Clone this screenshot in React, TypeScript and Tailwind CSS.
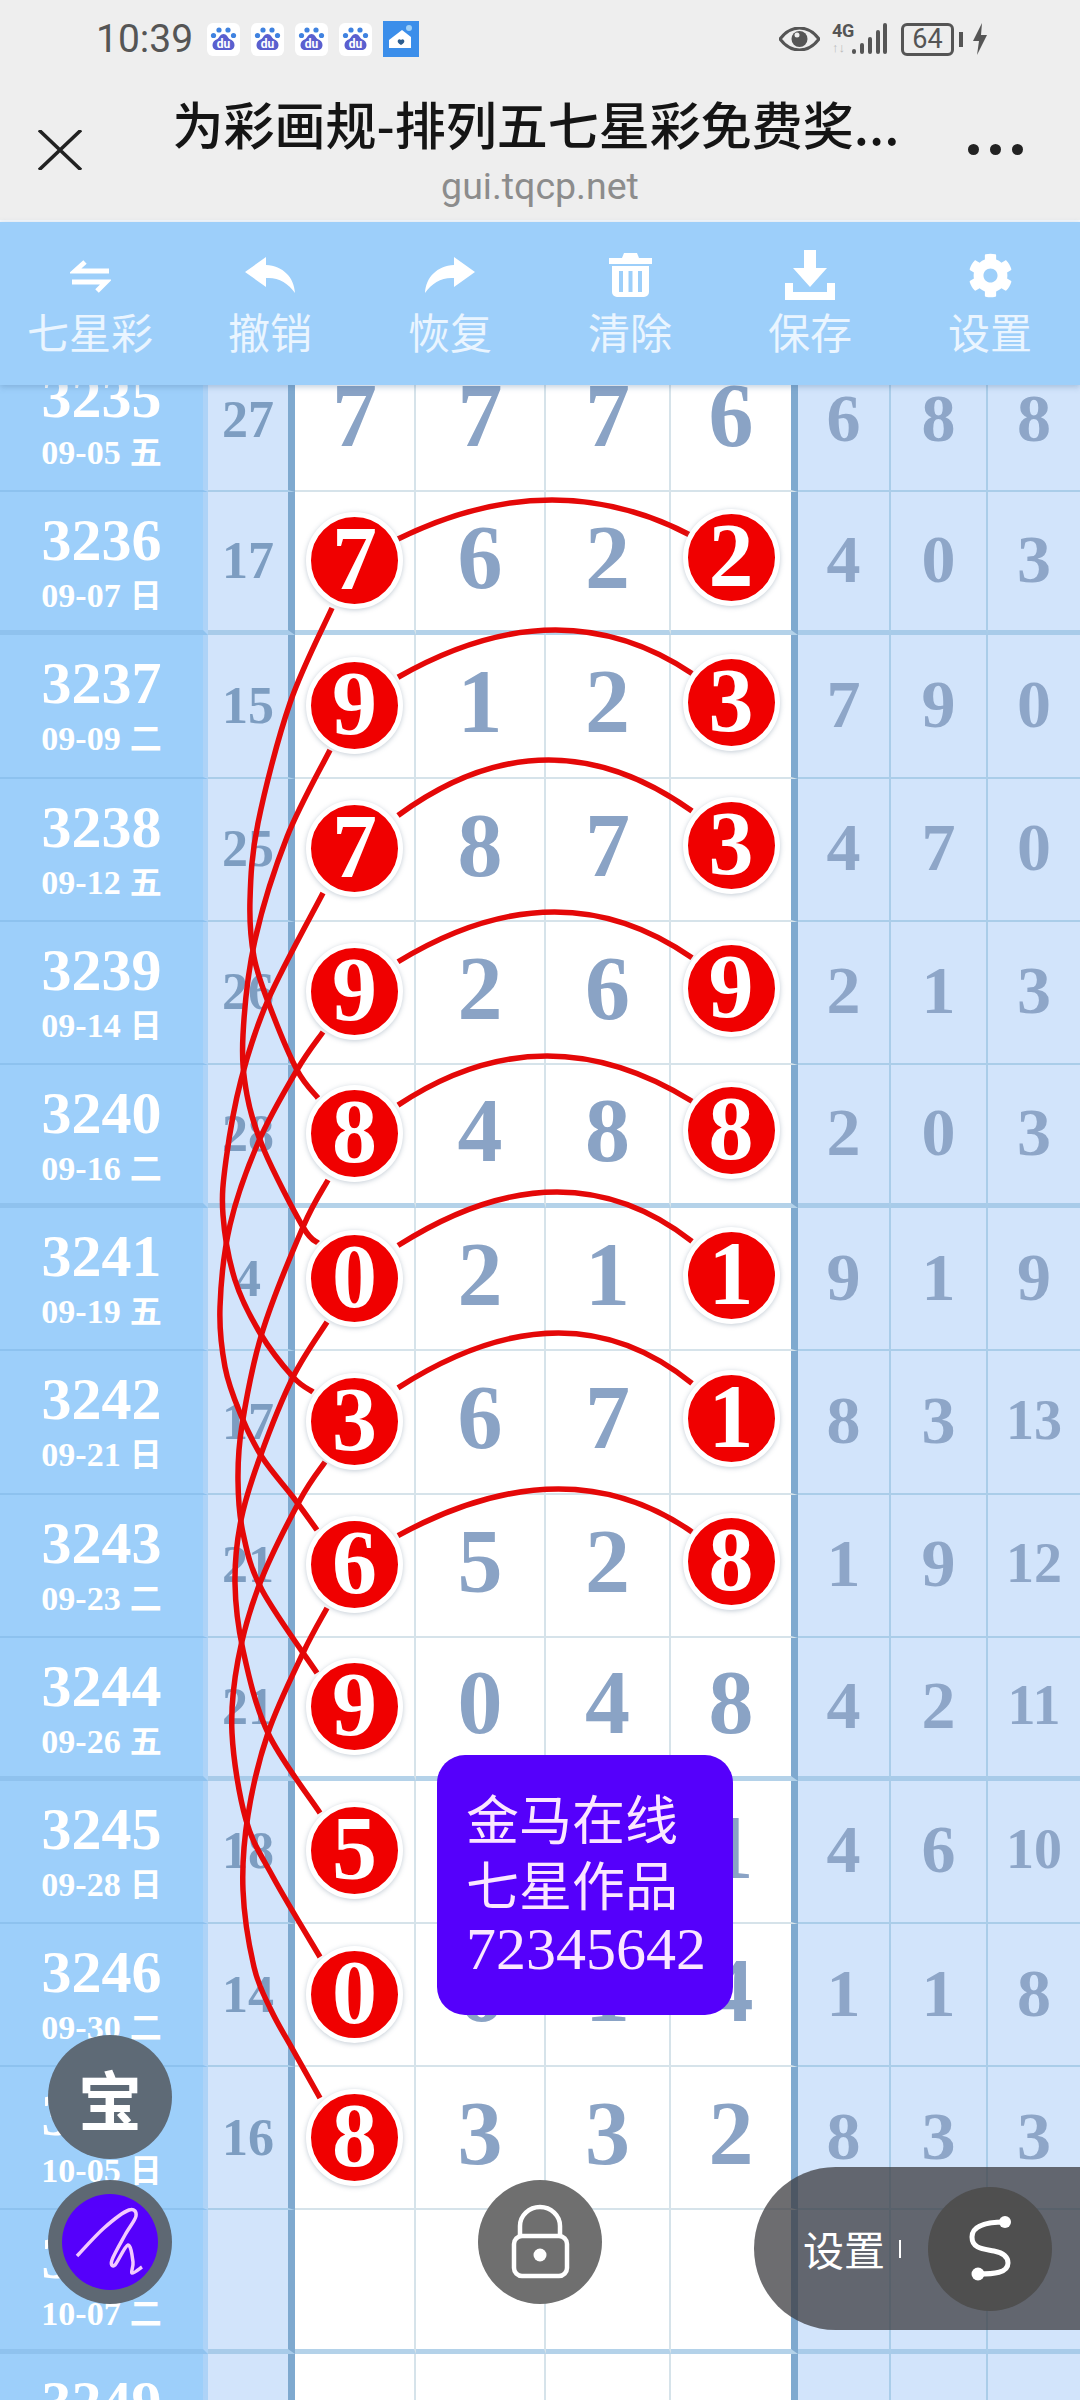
import React from 'react';
import { FaCog } from 'react-icons/fa';

type Row = {
  no: string;
  date: string;
  week: string;
  span: string;
  nums: string[];
  hits: number[];
  rest: string[];
};

const rows: Row[] = [
  { no: '3235', date: '09-05', week: '五', span: '27', nums: ['7', '7', '7', '6'], hits: [], rest: ['6', '8', '8'] },
  { no: '3236', date: '09-07', week: '日', span: '17', nums: ['7', '6', '2', '2'], hits: [0, 3], rest: ['4', '0', '3'] },
  { no: '3237', date: '09-09', week: '二', span: '15', nums: ['9', '1', '2', '3'], hits: [0, 3], rest: ['7', '9', '0'] },
  { no: '3238', date: '09-12', week: '五', span: '25', nums: ['7', '8', '7', '3'], hits: [0, 3], rest: ['4', '7', '0'] },
  { no: '3239', date: '09-14', week: '日', span: '26', nums: ['9', '2', '6', '9'], hits: [0, 3], rest: ['2', '1', '3'] },
  { no: '3240', date: '09-16', week: '二', span: '28', nums: ['8', '4', '8', '8'], hits: [0, 3], rest: ['2', '0', '3'] },
  { no: '3241', date: '09-19', week: '五', span: '4', nums: ['0', '2', '1', '1'], hits: [0, 3], rest: ['9', '1', '9'] },
  { no: '3242', date: '09-21', week: '日', span: '17', nums: ['3', '6', '7', '1'], hits: [0, 3], rest: ['8', '3', '13'] },
  { no: '3243', date: '09-23', week: '二', span: '21', nums: ['6', '5', '2', '8'], hits: [0, 3], rest: ['1', '9', '12'] },
  { no: '3244', date: '09-26', week: '五', span: '21', nums: ['9', '0', '4', '8'], hits: [0], rest: ['4', '2', '11'] },
  { no: '3245', date: '09-28', week: '日', span: '18', nums: ['5', '3', '7', '1'], hits: [0], rest: ['4', '6', '10'] },
  { no: '3246', date: '09-30', week: '二', span: '14', nums: ['0', '6', '1', '4'], hits: [0], rest: ['1', '1', '8'] },
  { no: '3247', date: '10-05', week: '日', span: '16', nums: ['8', '3', '3', '2'], hits: [0], rest: ['8', '3', '3'] },
  { no: '3248', date: '10-07', week: '二', span: '', nums: ['', '', '', ''], hits: [], rest: ['', '', ''] },
  { no: '3249', date: '10-09', week: '四', span: '', nums: ['', '', '', ''], hits: [], rest: ['', '', ''] },
];

// centre line of the first ball row, then one row height per step
const ballY = (i: number) => 562 + i * 143;

// peak of each arc across a row
const arcPeaks = [
  [553, 500], [560, 630], [546, 760], [558, 912],
  [543, 1056], [563, 1192], [566, 1333], [566, 1489],
];

// curves that run down the left side from ball to ball, read off the picture
const curves: number[][][] = [
  [[332, 608], [290, 703], [258, 823], [250, 900], [254, 957], [270, 1007], [297, 1070], [318, 1098]],
  [[330, 750], [287, 837], [255, 940], [243, 1035], [247, 1095], [264, 1150], [303, 1227], [318, 1243]],
  [[323, 893], [268, 1000], [241, 1080], [226, 1160], [223, 1215], [235, 1280], [260, 1333], [293, 1377], [313, 1392]],
  [[323, 1032], [297, 1070], [258, 1143], [230, 1225], [220, 1307], [225, 1367], [240, 1413], [262, 1457], [293, 1497], [317, 1530]],
  [[328, 1180], [303, 1227], [262, 1333], [242, 1425], [238, 1480], [243, 1533], [262, 1590], [317, 1673]],
  [[327, 1322], [293, 1377], [260, 1457], [241, 1520], [235, 1583], [243, 1650], [268, 1733], [320, 1813]],
  [[325, 1462], [300, 1500], [260, 1583], [238, 1660], [232, 1733], [246, 1820], [273, 1877], [320, 1957]],
  [[327, 1608], [303, 1653], [268, 1733], [248, 1815], [243, 1890], [254, 1967], [271, 2010], [293, 2050], [320, 2098]],
];

function smooth(pts: number[][]) {
  let d = `M${pts[0][0]} ${pts[0][1]}`;
  for (let i = 0; i < pts.length - 1; i++) {
    const p0 = pts[Math.max(i - 1, 0)];
    const p1 = pts[i];
    const p2 = pts[i + 1];
    const p3 = pts[Math.min(i + 2, pts.length - 1)];
    const c1x = p1[0] + (p2[0] - p0[0]) / 6;
    const c1y = p1[1] + (p2[1] - p0[1]) / 6;
    const c2x = p2[0] - (p3[0] - p1[0]) / 6;
    const c2y = p2[1] - (p3[1] - p1[1]) / 6;
    d += ` C${c1x} ${c1y} ${c2x} ${c2y} ${p2[0]} ${p2[1]}`;
  }
  return d;
}

function arcPath(i: number) {
  const [px, py] = arcPeaks[i];
  const cy = ballY(i);
  const rise = cy - py;
  const sy = cy - rise * 0.37;
  const ey = cy - rise * 0.42;
  const c = (4 * py - sy - ey) / 2;
  return `M398 ${sy} Q${px} ${c} 692 ${ey}`;
}

function Ball({ value, right }: { value: string; right?: boolean }) {
  return (
    <div className={`relative z-20 flex h-[97px] w-[97px] shrink-0 items-center justify-center rounded-full border-[5px] border-white bg-[#f00000] text-[90px] font-bold leading-none text-white shadow-[0_1px_5px_rgba(120,140,160,0.45)] ${right ? 'mb-[7px]' : 'mb-px'}`}>
      <span className="-mt-[3px]">{value}</span>
    </div>
  );
}

function TableRow({ row, index }: { row: Row; index: number }) {
  const thick = index % 4 === 1;
  const lineW = thick ? 'border-b-[5px] border-b-[#b4d2e9]' : 'border-b-2 border-b-[#d6e3ea]';
  const lineB = thick ? 'border-b-[5px] border-b-[#a8cbe9]' : 'border-b-2 border-b-[#aacde9]';
  return (
    <div className="grid h-[143.2px] grid-cols-[208px_87px_121px_130px_125px_127px_93px_97px_92px]">
      <div className={`flex flex-col items-center border-r-[5px] border-r-[#aed3f7] bg-[#9dcffa] pt-[15px] text-white ${thick ? 'border-b-[5px] border-b-[#8fc2ee]' : 'border-b-2 border-b-[#8dc2ef]'}`}>
        <div className="text-[60px] font-bold leading-[66px]">{row.no}</div>
        <div className="mt-[3px] flex items-center gap-[9px] text-[34px] font-bold leading-[40px]">
          <span>{row.date}</span>
          <span className="text-[32px]">{row.week}</span>
        </div>
      </div>
      <div className={`flex items-center justify-center border-r-[7px] border-r-[#7fa9cf] bg-[#d2e4fb] text-[52px] font-bold text-[#7d9dc1] ${lineB}`}>
        {row.span}
      </div>
      {row.nums.map((n, i) => (
        <div
          key={i}
          className={`flex items-center justify-center bg-white text-[90px] font-bold text-[#8aa3c5] ${lineW} ${i === 3 ? 'border-r-[7px] border-r-[#7fa9cf]' : 'border-r-2 border-r-[#d6e3ea]'}`}
        >
          {row.hits.includes(i) ? <Ball value={n} right={i === 3} /> : <span className="-mt-[8px]">{n}</span>}
        </div>
      ))}
      {row.rest.map((n, i) => (
        <div
          key={i}
          className={`flex items-center justify-center bg-[#d2e4fb] font-bold text-[#8ea6c8] ${n.length > 1 ? 'text-[56px]' : 'text-[68px]'} ${lineB} ${i < 2 ? 'border-r-2 border-r-[#aacde9]' : ''}`}
        >
          <span className="-mt-[4px]">{n}</span>
        </div>
      ))}
    </div>
  );
}

function BaiduIcon() {
  return (
    <svg width="33" height="33" viewBox="0 0 33 33">
      <rect width="33" height="33" rx="6" fill="#ffffff" />
      <circle cx="12" cy="7" r="2.6" fill="#3f82e0" />
      <circle cx="21" cy="7" r="2.6" fill="#3f82e0" />
      <circle cx="6.5" cy="12.5" r="2.6" fill="#3f82e0" />
      <circle cx="26.5" cy="12.5" r="2.6" fill="#3f82e0" />
      <path d="M16.5 11c-3 0-4 3-6 5-3 1-5 3-5 6 0 3 2 5 5 5h12c3 0 5-2 5-5 0-3-2-5-5-6-2-2-3-5-6-5z" fill="#5a5fcf" />
      <text x="16.5" y="25" textAnchor="middle" fontSize="12" fontWeight="700" fill="#ffffff" fontFamily="Roboto, sans-serif">du</text>
    </svg>
  );
}

function HomeIcon() {
  return (
    <svg width="36" height="36" viewBox="0 0 36 36">
      <rect width="36" height="36" fill="#3b8eea" />
      <path d="M6 19 19 9l9 7v11H6z" fill="#ffffff" />
      <circle cx="26" cy="7" r="3" fill="#9fd0f7" />
      <path d="M18 24c-3-2-4-3-3-5 1-1 2-1 3 0 1-1 2-1 3 0 1 2 0 3-3 5z" fill="#2c5d8f" />
    </svg>
  );
}

function StatusBar() {
  return (
    <div className="flex h-[78px] items-center pl-[96px] pr-[92px]">
      <span className="font-['Roboto',sans-serif] text-[39px] leading-none text-[#555555]">10:39</span>
      <div className="ml-[14px] flex items-center gap-[11px]">
        <BaiduIcon />
        <BaiduIcon />
        <BaiduIcon />
        <BaiduIcon />
        <HomeIcon />
      </div>
      <div className="ml-auto flex items-center">
        <svg width="41" height="24" viewBox="0 0 41 24">
          <path d="M1 12C7 4 13 1 20.5 1S34 4 40 12c-6 8-12.5 11-19.5 11S7 20 1 12z" fill="none" stroke="#555555" strokeWidth="3" />
          <circle cx="20.5" cy="12" r="8" fill="#555555" />
          <circle cx="18" cy="8" r="2.5" fill="#eeeeee" />
        </svg>
        <div className="ml-[12px] flex h-[34px] w-[20px] flex-col font-['Roboto',sans-serif] font-bold leading-none">
          <span className="text-[18px] tracking-tight text-[#555555]">4G</span>
          <span className="mt-px text-[13px] text-[#bbbbbb]">↑↓</span>
        </div>
        <svg width="36" height="32" viewBox="0 0 36 32" className="-ml-px">
          <rect x="1" y="26" width="4" height="5" rx="2" fill="#555555" />
          <rect x="9" y="20" width="4" height="11" rx="2" fill="#555555" />
          <rect x="17" y="14" width="4" height="17" rx="2" fill="#555555" />
          <rect x="25" y="7" width="4" height="24" rx="2" fill="#555555" />
          <rect x="32" y="0" width="4" height="31" rx="2" fill="#555555" />
        </svg>
        <div className="ml-[14px] flex h-[33px] w-[53px] items-center justify-center rounded-[6px] border-[3px] border-[#555555] font-['Roboto',sans-serif] text-[27px] leading-none text-[#555555]">
          64
        </div>
        <div className="ml-[5px] h-[15px] w-[4px] bg-[#555555]" />
        <svg width="16" height="32" viewBox="0 0 16 32" className="ml-[9px]">
          <path d="M10 0 1 18h6l-2 14 10-20H9z" fill="#555555" />
        </svg>
      </div>
    </div>
  );
}

function TitleBar() {
  return (
    <div className="flex h-[142px] items-start">
      <div className="w-[120px] pl-[38px] pt-[52px]">
        <svg width="44" height="40" viewBox="0 0 44 40">
          <path d="M1 0 43 40M43 0 1 40" stroke="#222222" strokeWidth="3.5" fill="none" />
        </svg>
      </div>
      <div className="flex flex-1 flex-col items-center pr-[8px]">
        <div className="mt-[18px] whitespace-nowrap font-['Noto_Sans_CJK_SC',sans-serif] text-[51px] font-medium leading-[54px] text-[#151515]">
          为彩画规-排列五七星彩免费奖...
        </div>
        <div className="mt-[16px] pl-[8px] font-['Roboto',sans-serif] text-[37.5px] leading-[40px] text-[#8c8c8c]">gui.tqcp.net</div>
      </div>
      <div className="flex w-[120px] gap-[11px] pl-[8px] pt-[66px]">
        <span className="h-[11px] w-[11px] rounded-full bg-[#222222]" />
        <span className="h-[11px] w-[11px] rounded-full bg-[#222222]" />
        <span className="h-[11px] w-[11px] rounded-full bg-[#222222]" />
      </div>
    </div>
  );
}

const tools = [
  {
    label: '七星彩',
    icon: (
      <svg width="41" height="35" viewBox="0 0 41 35">
        <path d="M39 13H5L15 4M2 24h34l-9 9" stroke="#ffffff" strokeWidth="5" fill="none" />
      </svg>
    ),
  },
  {
    label: '撤销',
    icon: (
      <svg width="50" height="36" viewBox="0 0 50 36" fill="#ffffff">
        <path d="M21 0 0 15l21 15v-9c12-1 22 5 29 15C49 20 38 9 21 8z" />
      </svg>
    ),
  },
  {
    label: '恢复',
    icon: (
      <svg width="50" height="36" viewBox="0 0 50 36" fill="#ffffff">
        <path d="M29 0l21 15-21 15v-9C17 20 7 26 0 36 1 20 12 9 29 8z" />
      </svg>
    ),
  },
  {
    label: '清除',
    icon: (
      <svg width="43" height="44" viewBox="0 0 43 44" fill="#ffffff" fillRule="evenodd">
        <path d="M15 0h13l2 5h13v6H0V5h13z" />
        <path d="M3 13h37v26a5 5 0 0 1-5 5H8a5 5 0 0 1-5-5zM10 18v21h4V18zM19.5 18v21h4V18zM29 18v21h4V18z" />
      </svg>
    ),
  },
  {
    label: '保存',
    icon: (
      <svg width="50" height="50" viewBox="0 0 50 50" fill="#ffffff">
        <path d="M19 0h12v18h11L25 37 8 18h11z" />
        <path d="M0 33h8v9h34v-9h8v17H0z" />
      </svg>
    ),
  },
  { label: '设置', icon: <FaCog size={45} color="#ffffff" /> },
];

function Toolbar() {
  return (
    <div className="grid h-[163px] grid-cols-6 bg-[#9dcffa] shadow-[0_2px_6px_rgba(80,120,160,0.35)]">
      {tools.map((t) => (
        <div key={t.label} className="flex flex-col items-center text-[#eaf5ff]">
          <div className="mt-[27px] flex h-[52px] items-center">{t.icon}</div>
          <div className="mt-[5px] font-['Noto_Sans_CJK_SC',sans-serif] text-[42px] leading-[50px]">{t.label}</div>
        </div>
      ))}
    </div>
  );
}

export default function App() {
  return (
    <div className="relative h-[2400px] w-[1080px] overflow-hidden bg-white font-['Liberation_Serif','Noto_Sans_CJK_SC',serif]">
      <header className="relative z-30">
        <div className="h-[220px] bg-[#eeeeee]">
          <StatusBar />
          <TitleBar />
        </div>
        <div className="h-[2px] bg-[#f4f8fc]" />
        <Toolbar />
      </header>

      <div className="-mt-[36px]">
        {rows.map((row, i) => (
          <TableRow key={row.no} row={row} index={i} />
        ))}
      </div>

      {/* link lines between the marked numbers */}
      <svg className="absolute left-0 top-0 z-10" width="1080" height="2400" viewBox="0 0 1080 2400" fill="none">
        {arcPeaks.map((_, i) => (
          <path key={i} d={arcPath(i)} stroke="#e40808" strokeWidth="5.5" />
        ))}
        {curves.map((c, i) => (
          <path key={i} d={smooth(c)} stroke="#e40808" strokeWidth="5.5" />
        ))}
      </svg>

      {/* author card */}
      <div className="absolute left-[437px] top-[1755px] z-40 h-[260px] w-[296px] rounded-[28px] bg-[#5500fb] pl-[29px] pt-[29px] text-[#fbe6ff]">
        <div className="font-['Noto_Sans_CJK_SC',sans-serif] text-[53px] leading-[66px]">金马在线</div>
        <div className="font-['Noto_Sans_CJK_SC',sans-serif] text-[53px] leading-[66px]">七星作品</div>
        <div className="text-[60px] leading-[66px]">72345642</div>
      </div>

      {/* floating buttons */}
      <div className="absolute left-[48px] top-[2035px] z-40 flex h-[124px] w-[124px] items-center justify-center rounded-full bg-[#5e6a76] font-['Noto_Sans_CJK_SC',sans-serif] text-[64px] font-bold text-white">
        宝
      </div>
      <div className="absolute left-[48px] top-[2180px] z-40 flex h-[124px] w-[124px] items-center justify-center rounded-full bg-[#5e6873]">
        <svg width="96" height="96" viewBox="0 0 96 96">
          <circle cx="48" cy="48" r="48" fill="#5500fb" />
          <path
            d={smooth([[15, 62], [42, 34], [67, 16], [74, 22], [63, 41], [50, 66], [53, 71], [66, 51], [71, 68], [70, 79], [80, 73]])}
            stroke="#f3c9ff"
            strokeWidth="3.5"
            fill="none"
          />
        </svg>
      </div>
      <div className="absolute left-[478px] top-[2180px] z-40 h-[124px] w-[124px] rounded-full bg-[#6f6f6f]">
        <svg width="124" height="124" viewBox="0 0 124 124" fill="none" stroke="#ffffff" strokeWidth="4.5">
          <rect x="36" y="56" width="53" height="40" rx="8" />
          <path d="M42 56V46a20 19 0 0 1 40 0v10" />
          <circle cx="62" cy="75" r="6.5" fill="#ffffff" stroke="none" />
        </svg>
      </div>
      <div className="absolute left-[754px] top-[2167px] z-40 flex h-[163px] w-[326px] items-center rounded-l-full bg-[#3c3c40]/75 pl-[49px]">
        <span className="font-['Noto_Sans_CJK_SC',sans-serif] text-[41px] leading-none text-white">设置</span>
        <span className="ml-[14px] h-[18px] w-[2px] bg-white" />
        <div className="ml-[27px] h-[124px] w-[124px] rounded-full bg-[#4f4f4f]">
          <svg width="124" height="124" viewBox="0 0 124 124" fill="none" stroke="#ffffff" strokeWidth="5">
            <path d="M77 35C60 35 44 38 44 50c0 12 12 12 22 14 10 2 14 6 14 12 0 10-14 11-30 11" />
            <circle cx="77" cy="35" r="6" fill="#ffffff" stroke="none" />
            <circle cx="50" cy="87" r="6.5" fill="#ffffff" stroke="none" />
          </svg>
        </div>
      </div>
    </div>
  );
}
